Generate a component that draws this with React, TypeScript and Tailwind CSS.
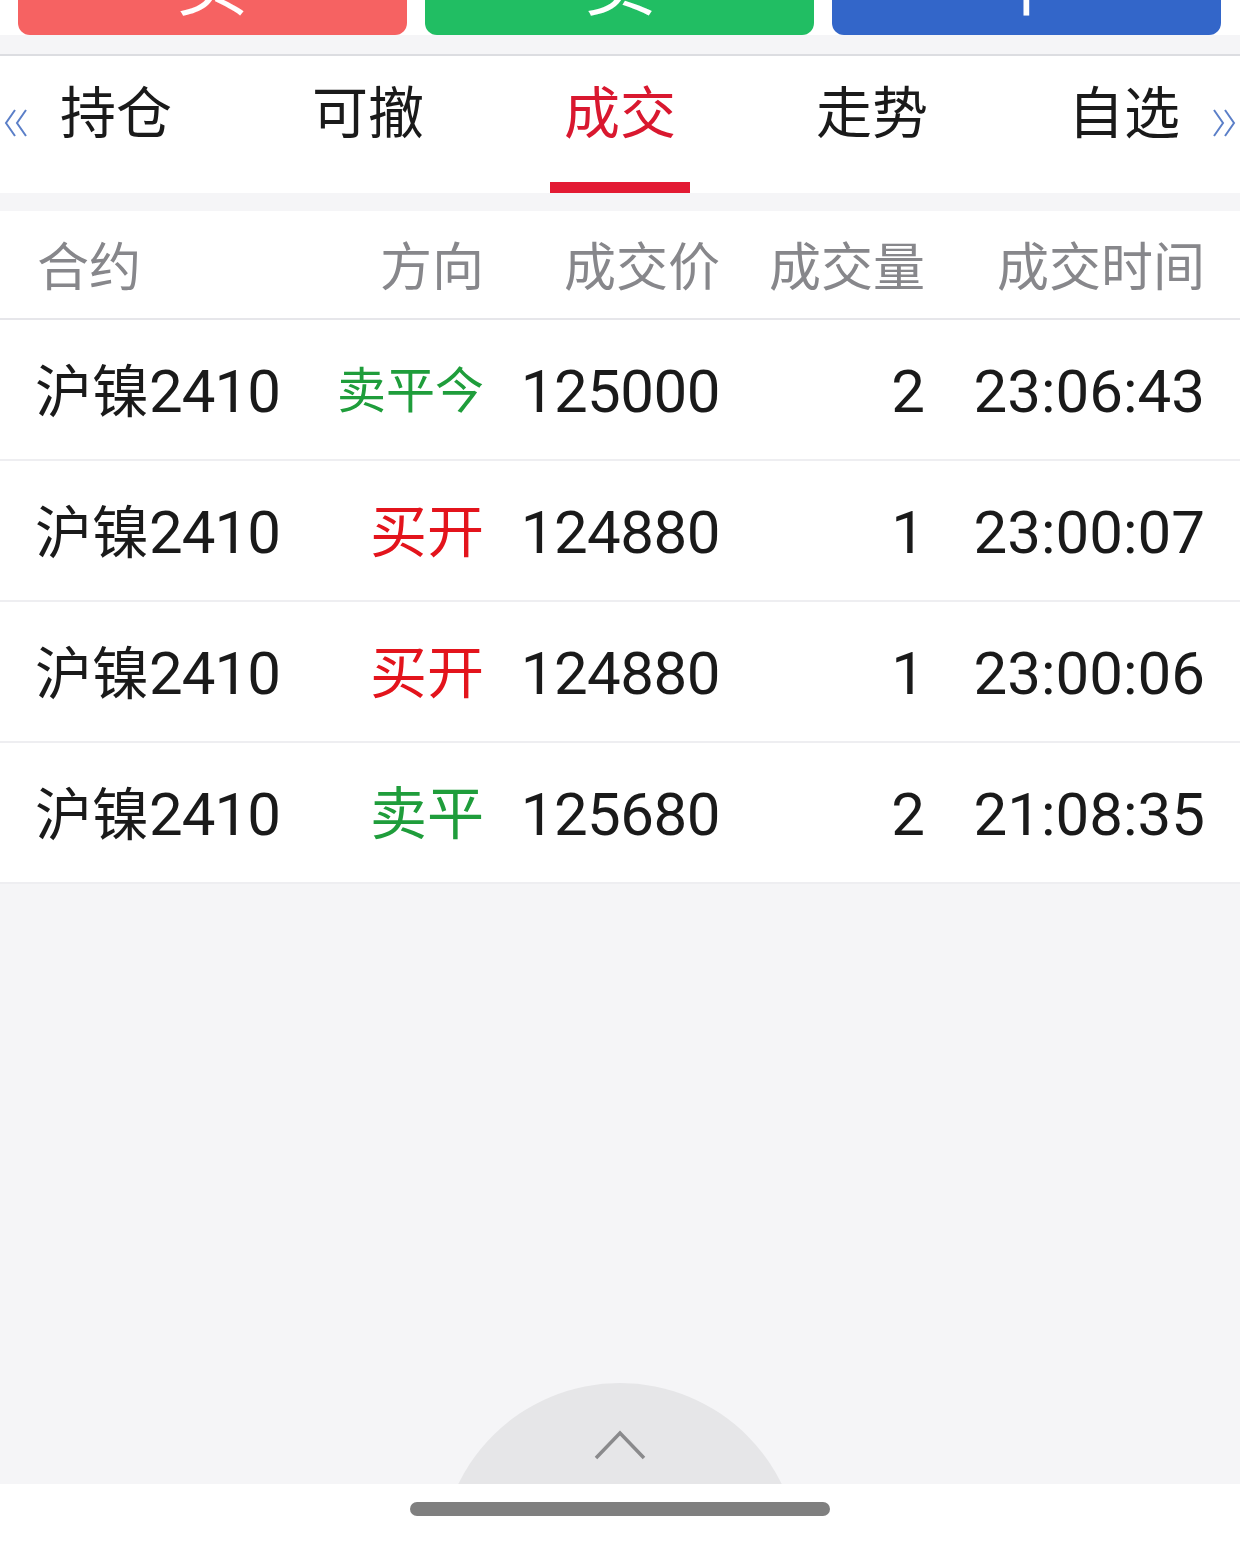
import { ReactNode } from "react"

const font = { fontFamily: "Roboto, 'Noto Sans CJK SC', sans-serif" }

type Trade = {
  contract: string
  code: string
  side: string
  sideColor: "green" | "red"
  small?: boolean
  price: string
  qty: string
  time: string
}

const trades: Trade[] = [
  { contract: "沪镍", code: "2410", side: "卖平今", sideColor: "green", small: true, price: "125000", qty: "2", time: "23:06:43" },
  { contract: "沪镍", code: "2410", side: "买开", sideColor: "red", price: "124880", qty: "1", time: "23:00:07" },
  { contract: "沪镍", code: "2410", side: "买开", sideColor: "red", price: "124880", qty: "1", time: "23:00:06" },
  { contract: "沪镍", code: "2410", side: "卖平", sideColor: "green", price: "125680", qty: "2", time: "21:08:35" },
]

const tabs = ["持仓", "可撤", "成交", "走势", "自选"]

function DoubleChevron({ dir }: { dir: "left" | "right" }) {
  return (
    <svg width="28" height="30" viewBox="0 0 28 30" fill="none" stroke="#5b7fc8" strokeWidth="2">
      {dir === "left" ? (
        <>
          <polyline points="13,2 4,15 13,28" />
          <polyline points="24,2 15,15 24,28" />
        </>
      ) : (
        <>
          <polyline points="4,2 13,15 4,28" />
          <polyline points="15,2 24,15 15,28" />
        </>
      )}
    </svg>
  )
}

function ActionButton({ color, label }: { color: string; label: ReactNode }) {
  return (
    <div
      className={`flex h-[100px] w-[389px] items-end justify-center rounded-b-[12px] pb-[14px] text-[72px] leading-none text-white ${color}`}
    >
      {label}
    </div>
  )
}

export default function App() {
  return (
    <div className="flex min-h-[1541px] flex-col bg-white text-[#1a1a1a]" style={font}>
      {/* order buttons, mostly scrolled out of view */}
      <div className="h-[35px] overflow-hidden bg-white">
        <div className="mt-[-65px] flex gap-[18px] px-[18px]">
          <ActionButton color="bg-[#f66262]" label="买" />
          <ActionButton color="bg-[#21be63]" label="卖" />
          <ActionButton color="bg-[#3366c9]" label="平" />
        </div>
      </div>
      <div className="h-[21px] border-b-2 border-[#dcdde1] bg-[#f5f5f7]" />

      {/* tabs */}
      <div className="flex h-[137px] items-stretch bg-white">
        <div className="flex w-[62px] items-center pb-[4px] pl-[2px]">
          <DoubleChevron dir="left" />
        </div>
        <div className="flex flex-1 justify-between">
          {tabs.map((t) => {
            const active = t === "成交"
            return (
              <div key={t} className="flex h-full w-[108px] flex-col items-center">
                <div
                  className={`pt-[23px] text-[56px] leading-[70px] whitespace-nowrap ${active ? "text-[#d9182f]" : "text-[#1a1a1a]"}`}
                >
                  {t}
                </div>
                {active && <div className="mt-auto h-[11px] w-[140px] shrink-0 bg-[#e31a33]" />}
              </div>
            )
          })}
        </div>
        <div className="flex w-[62px] items-center justify-end pb-[4px] pr-[2px]">
          <DoubleChevron dir="right" />
        </div>
      </div>
      <div className="h-[18px] bg-[#f5f5f7]" />

      {/* table */}
      <div className="grid h-[109px] grid-cols-[290px_194px_236px_205px_280px_35px] items-center border-b-2 border-[#e6e6ea] pt-[8px] text-[52px] text-[#87878b]">
        <div className="pl-[37px]">合约</div>
        <div className="text-right">方向</div>
        <div className="text-right">成交价</div>
        <div className="text-right">成交量</div>
        <div className="text-right">成交时间</div>
        <div />
      </div>
      {trades.map((r, i) => (
        <div
          key={i}
          className="grid h-[141px] grid-cols-[290px_194px_236px_205px_280px_35px] items-center border-b-2 border-[#eeeef1] pt-[4px] text-[60px]"
        >
          <div className="pl-[35px] whitespace-nowrap">
            <span className="text-[57px]">{r.contract}</span>
            <span className="tracking-[-1px]">{r.code}</span>
          </div>
          <div
            className={`text-right whitespace-nowrap ${r.small ? "text-[49px]" : "text-[57px]"} ${r.sideColor === "green" ? "text-[#1f9d3b]" : "text-[#e3141c]"}`}
          >
            {r.side}
          </div>
          <div className="text-right tracking-[-0.5px]">{r.price}</div>
          <div className="text-right">{r.qty}</div>
          <div className="text-right">{r.time}</div>
          <div />
        </div>
      ))}

      {/* empty area with pull-up handle */}
      <div className="flex flex-1 flex-col justify-end bg-[#f5f5f7]">
        <div className="mx-auto h-[101px] w-[360px] overflow-hidden">
          <div className="flex h-[360px] w-[360px] justify-center rounded-full bg-[#e6e6e8] pt-[46px]">
            <svg width="54" height="32" viewBox="0 0 54 32" fill="none" stroke="#8a8a8c" strokeWidth="3.5">
              <polyline points="3,29 27,4 51,29" />
            </svg>
          </div>
        </div>
      </div>
      <div className="flex h-[57px] shrink-0 items-start justify-center bg-white pt-[18px]">
        <div className="h-[14px] w-[420px] rounded-full bg-[#7f7f7f]" />
      </div>
    </div>
  )
}
